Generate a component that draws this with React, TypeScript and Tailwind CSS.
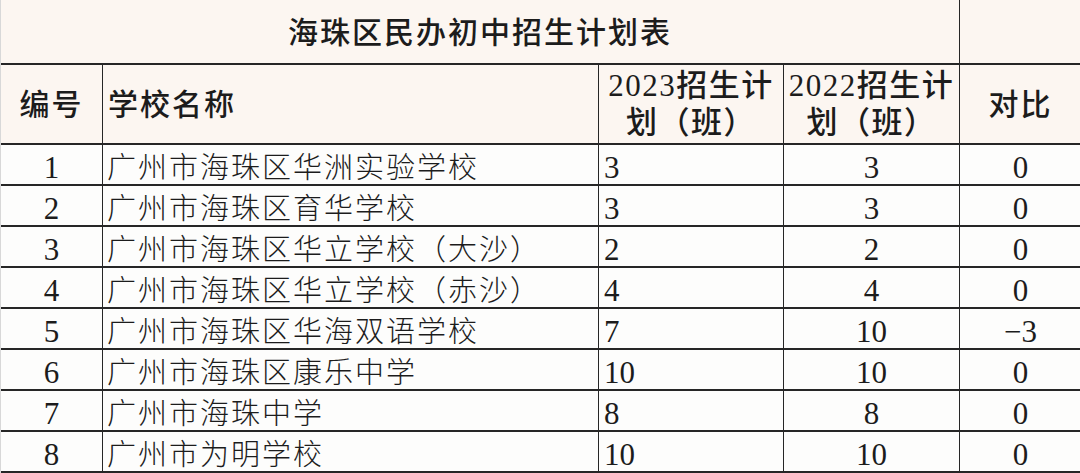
import React from "react";

const font = { fontFamily: "'Liberation Serif', 'Noto Sans CJK SC', serif" };

const rows: [string, string, string, string, string][] = [
  ["1", "广州市海珠区华洲实验学校", "3", "3", "0"],
  ["2", "广州市海珠区育华学校", "3", "3", "0"],
  ["3", "广州市海珠区华立学校（大沙）", "2", "2", "0"],
  ["4", "广州市海珠区华立学校（赤沙）", "4", "4", "0"],
  ["5", "广州市海珠区华海双语学校", "7", "10", "−3"],
  ["6", "广州市海珠区康乐中学", "10", "10", "0"],
  ["7", "广州市海珠中学", "8", "8", "0"],
  ["8", "广州市为明学校", "10", "10", "0"],
];

export default function App() {
  return (
    <div
      className="w-[1080px] h-[473px] bg-[#fdfdfc] text-[#1c1c1c] overflow-hidden border-l border-l-[#d8d8d8]"
      style={font}
    >
      {/* title row */}
      <div className="grid grid-cols-[959px_121px] h-[65px] bg-[#fcf6f1] border-b-2 border-[#262626]">
        <div className="flex items-center justify-center border-r border-[#262626] text-[30px] font-medium tracking-[2px] pt-[2px]">
          海珠区民办初中招生计划表
        </div>
        <div />
      </div>
      {/* header row */}
      <div className="grid grid-cols-[102px_496px_185px_176px_121px] h-[80px] bg-[#fcf6f1] border-b-2 border-[#262626] text-[30px] font-medium">
        <div className="flex items-center justify-center border-r border-[#262626] tracking-[2px]">编号</div>
        <div className="flex items-center pl-[5px] border-r border-[#262626] tracking-[2px]">学校名称</div>
        <div className="flex flex-col items-center justify-center border-r border-[#262626] leading-[37px] tracking-[1.5px] text-[31px]">
          <span>2023招生计</span>
          <span>划（班）</span>
        </div>
        <div className="flex flex-col items-center justify-center border-r border-[#262626] leading-[37px] tracking-[1.5px] text-[31px]">
          <span>2022招生计</span>
          <span>划（班）</span>
        </div>
        <div className="flex items-center justify-center tracking-[2px]">对比</div>
      </div>
      {/* body rows */}
      {rows.map((r) => (
        <div
          key={r[0]}
          className="grid grid-cols-[102px_496px_185px_176px_121px] h-[41px] border-b-2 border-[#262626] text-[31px] font-light"
        >
          <div className="flex items-center justify-center border-r border-[#262626]">{r[0]}</div>
          <div className="flex items-center pl-[4px] border-r border-[#262626] text-[29px] tracking-[2px] whitespace-nowrap">
            {r[1]}
          </div>
          <div className="flex items-center pl-[5px] border-r border-[#262626]">{r[2]}</div>
          <div className="flex items-center justify-center border-r border-[#262626]">{r[3]}</div>
          <div className="flex items-center justify-center">{r[4]}</div>
        </div>
      ))}
    </div>
  );
}
